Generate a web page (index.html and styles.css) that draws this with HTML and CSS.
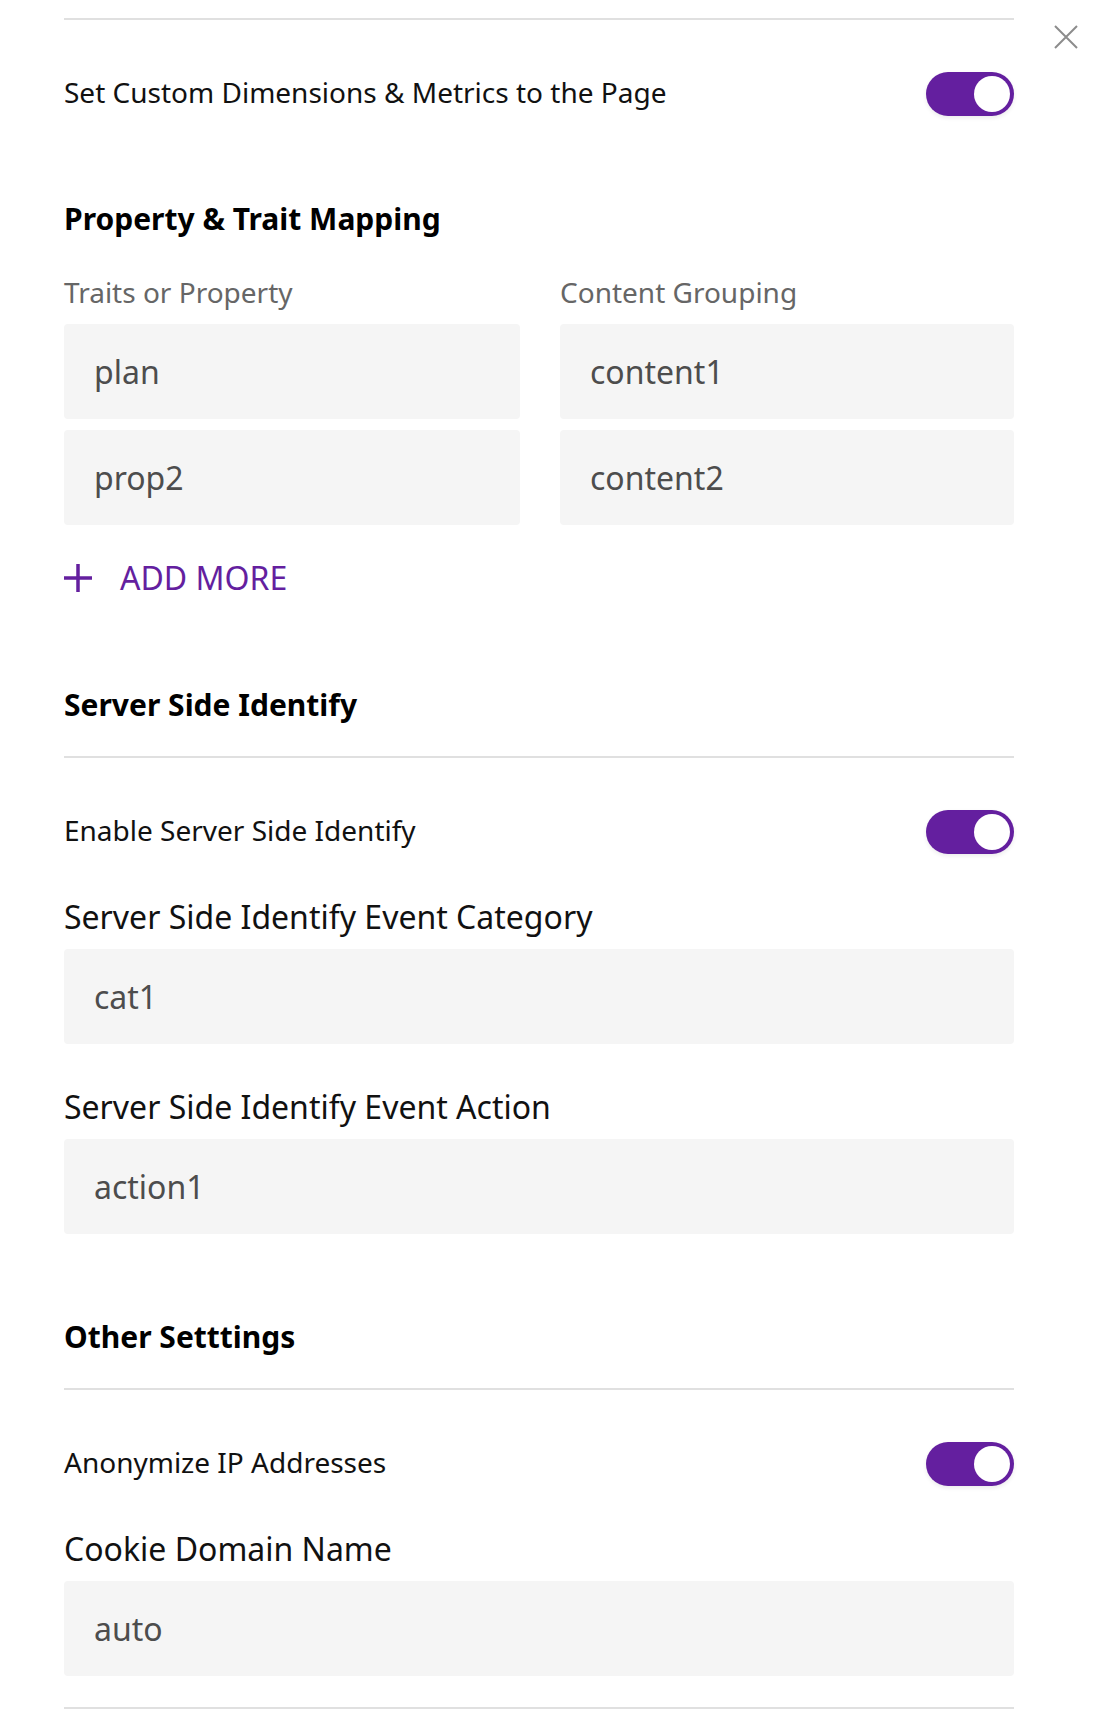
FILE: index.html
```html
<!DOCTYPE html>
<html lang="en">
<head>
<meta charset="utf-8">
<title>Settings</title>
<link rel="stylesheet" href="styles.css">
</head>
<body>
<div class="page">
  <button class="close" aria-label="Close">
    <svg width="24" height="24" viewBox="0 0 24 24"><path d="M1 1 L23 23 M23 1 L1 23" stroke="#8c8c8c" stroke-width="2" fill="none"/></svg>
  </button>
  <div class="panel">
    <div class="divider first"></div>

    <div class="toggle-row">
      <span class="toggle-label">Set Custom Dimensions &amp; Metrics to the Page</span>
      <span class="toggle on"><span class="knob"></span></span>
    </div>

    <h2 class="section-title mapping-title">Property &amp; Trait Mapping</h2>

    <div class="mapping">
      <div class="col-label">Traits or Property</div>
      <div class="col-label">Content Grouping</div>
      <div class="field">plan</div>
      <div class="field">content1</div>
      <div class="field">prop2</div>
      <div class="field">content2</div>
    </div>

    <div class="add-more">
      <svg class="plus" width="28" height="28" viewBox="0 0 28 28"><path d="M14 0 V28 M0 14 H28" stroke="#641f9f" stroke-width="3.5" fill="none"/></svg>
      <span>ADD MORE</span>
    </div>

    <h2 class="section-title spaced">Server Side Identify</h2>
    <div class="divider under-title"></div>

    <div class="toggle-row">
      <span class="toggle-label">Enable Server Side Identify</span>
      <span class="toggle on"><span class="knob"></span></span>
    </div>

    <div class="field-label">Server Side Identify Event Category</div>
    <div class="field">cat1</div>

    <div class="field-label">Server Side Identify Event Action</div>
    <div class="field">action1</div>

    <h2 class="section-title other-title">Other Setttings</h2>
    <div class="divider under-title"></div>

    <div class="toggle-row">
      <span class="toggle-label">Anonymize IP Addresses</span>
      <span class="toggle on"><span class="knob"></span></span>
    </div>

    <div class="field-label">Cookie Domain Name</div>
    <div class="field">auto</div>

    <div class="divider last"></div>
  </div>
</div>
</body>
</html>
```

FILE: styles.css
```css
* { box-sizing: border-box; }
html, body { margin: 0; padding: 0; background: #fff; }
body { font-family: "Noto Sans", "Open Sans", sans-serif; color: #111; }

.page { position: relative; width: 1106px; min-height: 1726px; }

.close {
  position: absolute;
  left: 1054px;
  top: 25px;
  width: 24px;
  height: 24px;
  padding: 0;
  border: 0;
  background: none;
  display: block;
}
.close svg { display: block; }

.panel { margin-left: 64px; width: 950px; display: flex; flex-direction: column; }

.divider { height: 2px; background: #e0e0e0; }
.divider.first { margin-top: 18px; }
.divider.under-title { margin-top: 31px; }
.divider.last { margin-top: 31px; }

.toggle-row {
  margin-top: 52px;
  height: 44px;
  display: flex;
  align-items: center;
  justify-content: space-between;
}
.toggle-label { font-size: 28px; line-height: 44px; color: #111; margin-top: -4px; }

.toggle {
  width: 88px;
  height: 44px;
  border-radius: 22px;
  background: #641f9f;
  display: flex;
  align-items: center;
  justify-content: flex-end;
  padding-right: 4px;
  box-shadow: 0 2px 4px rgba(0,0,0,0.08);
}
.knob { width: 36px; height: 36px; border-radius: 50%; background: #fff; }

.section-title {
  margin: 0;
  font-size: 30px;
  font-weight: 700;
  line-height: 40px;
  color: #000;
}
.mapping-title { margin-top: 83px; }
.section-title.spaced { margin-top: 87px; }
.other-title { margin-top: 83px; }

.mapping {
  margin-top: 35px;
  display: grid;
  grid-template-columns: 456px 454px;
  column-gap: 40px;
  row-gap: 11px;
}
.col-label { font-size: 28px; line-height: 36px; color: #666; margin-bottom: 3px; }

.field {
  height: 95px;
  background: #f5f5f5;
  border-radius: 4px;
  padding-left: 30px;
  display: flex;
  align-items: center;
  font-size: 32px;
  color: #4d4d4d;
}

.add-more {
  margin-top: 33px;
  height: 40px;
  display: flex;
  align-items: center;
  gap: 28px;
  color: #641f9f;
  font-size: 32px;
  line-height: 40px;
}
.plus { display: block; }

.field-label {
  margin-top: 43px;
  margin-bottom: 12px;
  font-size: 32px;
  line-height: 40px;
  color: #111;
}
```
